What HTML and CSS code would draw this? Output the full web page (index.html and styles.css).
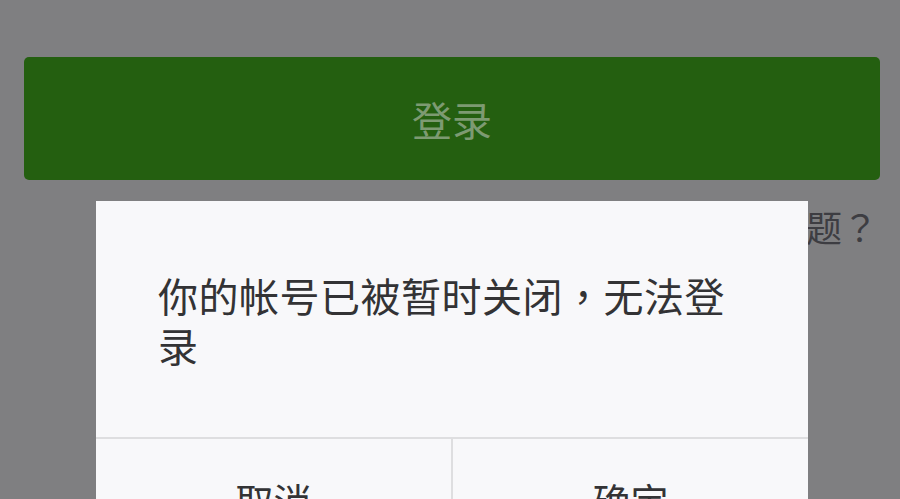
FILE: index.html
```html
<!DOCTYPE html>
<html lang="zh-CN">
<head>
<meta charset="utf-8">
<link rel="stylesheet" href="styles.css">
</head>
<body>
<div class="page">
  <div class="login-btn">登录</div>
  <div class="help-row"><span class="help">登录遇到问题<span class="punct" lang="zh-TW">？</span></span></div>
</div>
<div class="dialog">
  <div class="dialog-msg">你的帐号已被暂时关闭<span class="punct" lang="zh-TW">，</span>无法登录</div>
  <div class="dialog-actions">
    <div class="action">取消</div>
    <div class="action">确定</div>
  </div>
</div>
</body>
</html>
```
FILE: styles.css
```css
html, body {
  margin: 0;
  padding: 0;
  height: 100%;
  overflow: hidden;
}
body {
  background: #7f7f81;
  font-family: "Noto Sans CJK SC", "Noto Sans", sans-serif;
  position: relative;
}
.punct {
  font-family: "Noto Sans CJK TC", "Noto Sans CJK SC", sans-serif;
}
.page {
  padding: 57px 20px 0 24px;
}
.login-btn {
  height: 123px;
  border-radius: 5px;
  background: #245f10;
  color: #7d9a72;
  font-size: 40px;
  display: flex;
  align-items: center;
  justify-content: center;
}
.help-row {
  display: flex;
  justify-content: flex-end;
  margin-top: 21px;
  padding-right: 2px;
}
.help {
  font-size: 36px;
  line-height: 50px;
  color: #3d3d42;
}
.dialog {
  position: absolute;
  left: 96px;
  top: 201px;
  width: 712px;
  height: 340px;
  background: #f8f8fa;
  display: flex;
  flex-direction: column;
}
.dialog-msg {
  padding: 69px 62px 67px 62px;
  font-size: 40px;
  line-height: 50px;
  letter-spacing: 0.5px;
  color: #333335;
}
.dialog-actions {
  display: flex;
  border-top: 2px solid #dedee0;
  flex: 1;
}
.action {
  flex: 1;
  text-align: center;
  font-size: 38px;
  line-height: 50px;
  padding-top: 36px;
  color: #333335;
}
.action + .action {
  border-left: 2px solid #dedee0;
}
```
